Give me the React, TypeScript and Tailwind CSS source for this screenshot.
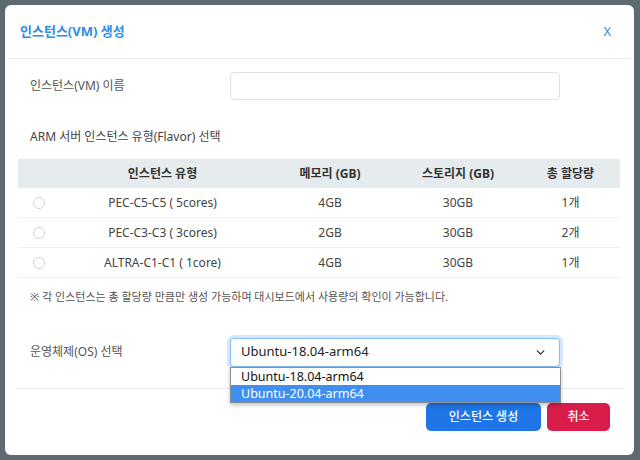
import { ChevronDown } from "lucide-react"

type Flavor = {
  name: string
  memory: string
  storage: string
  total: string
}

const flavors: Flavor[] = [
  { name: "PEC-C5-C5 ( 5cores)", memory: "4GB", storage: "30GB", total: "1개" },
  { name: "PEC-C3-C3 ( 3cores)", memory: "2GB", storage: "30GB", total: "2개" },
  { name: "ALTRA-C1-C1 ( 1core)", memory: "4GB", storage: "30GB", total: "1개" },
]

const cols = "grid grid-cols-[42px_205px_130px_126px_99px] items-center"

export default function App() {
  return (
    <div
      className="h-[460px] w-[640px] overflow-hidden bg-[#5d6a71] pt-[5px] pl-[5px]"
      style={{ fontFamily: '"Noto Sans", "Noto Sans CJK KR", sans-serif' }}
    >
      <div className="flex h-[450px] w-[629px] flex-col rounded-md bg-white">
        {/* header */}
        <div className="mx-[3px] flex h-[54px] items-center justify-between border-b border-[#e9edf0] pr-[20px] pl-[12px]">
          <h2 className="text-[13px] font-bold text-[#2b8de8]">인스턴스(VM) 생성</h2>
          <button type="button" className="text-[13px] text-[#2b8de8]">
            X
          </button>
        </div>

        {/* body */}
        <div className="flex flex-col px-[13px]">
          <div className="mt-[13px] flex items-center">
            <label className="w-[212px] pl-[12px] text-[12px] text-[#555]">인스턴스(VM) 이름</label>
            <input
              type="text"
              className="h-[28px] w-[330px] rounded-[4px] border border-[#dde3e8] bg-white outline-none"
            />
          </div>

          <p className="mt-[28px] pl-[12px] text-[12px] text-[#444]">ARM 서버 인스턴스 유형(Flavor) 선택</p>

          <div className="mt-[13px] w-[602px]">
            <div className={`${cols} h-[29px] bg-[#e6ebed] text-[12px] font-bold text-[#333]`}>
              <span />
              <span className="text-center">인스턴스 유형</span>
              <span className="text-center">메모리 (GB)</span>
              <span className="text-center">스토리지 (GB)</span>
              <span className="text-center">총 할당량</span>
            </div>
            {flavors.map((f) => (
              <div key={f.name} className={`${cols} h-[30px] border-b border-[#eef1f3] text-[12px] text-[#444]`}>
                <span className="flex justify-center">
                  <span className="h-[12px] w-[12px] rounded-full border border-[#cfd4d8]" />
                </span>
                <span className="text-center">{f.name}</span>
                <span className="text-center">{f.memory}</span>
                <span className="text-center">{f.storage}</span>
                <span className="text-center">{f.total}</span>
              </div>
            ))}
          </div>

          <p className="mt-[11px] pl-[12px] text-[11px] text-[#555]">
            ※ 각 인스턴스는 총 할당량 만큼만 생성 가능하며 대시보드에서 사용량의 확인이 가능합니다.
          </p>

          <div className="mt-[32px] flex items-center">
            <label className="w-[212px] pl-[12px] text-[12px] text-[#555]">운영체제(OS) 선택</label>
            <div className="relative">
              <div className="flex h-[29px] w-[330px] items-center justify-between rounded-[4px] border border-[#86bdf5] bg-white pr-[12px] pl-[10px] text-[13px] text-[#222] shadow-[0_0_0_3px_rgba(59,145,240,0.22)]">
                <span>Ubuntu-18.04-arm64</span>
                <ChevronDown className="h-[13px] w-[13px] text-[#333]" strokeWidth={2.5} />
              </div>
              <div className="absolute top-[29px] left-0 z-10 w-[331px] border border-[#8a8f94] bg-white text-[12.5px] leading-[17px] shadow-[0_2px_4px_rgba(0,0,0,0.25)]">
                <div className="px-[10px] text-[#111]">Ubuntu-18.04-arm64</div>
                <div className="bg-[#3f8ef0] px-[10px] text-white">Ubuntu-20.04-arm64</div>
              </div>
            </div>
          </div>
        </div>

        {/* footer */}
        <div className="mx-[11px] mt-[21px] border-t border-[#e9edf0]" />
        <div className="flex justify-end gap-[6px] pt-[14px] pr-[24px]">
          <button
            type="button"
            className="h-[28px] w-[115px] rounded-[5px] bg-[#1f75e6] text-[12px] font-medium text-white"
          >
            인스턴스 생성
          </button>
          <button
            type="button"
            className="h-[28px] w-[63px] rounded-[5px] bg-[#d81d4b] text-[12px] font-medium text-white"
          >
            취소
          </button>
        </div>
      </div>
    </div>
  )
}
